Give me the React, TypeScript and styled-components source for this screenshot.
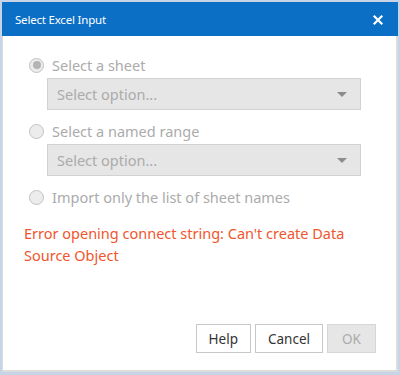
import React from "react";
import styled, { createGlobalStyle } from "styled-components";

const GlobalStyle = createGlobalStyle`
  html, body {
    margin: 0;
    padding: 0;
    background: #c7d4e8;
  }
  body {
    font-family: "Noto Sans", "Open Sans", sans-serif;
  }
`;

const OPTIONS = [
  { label: "Select a sheet", checked: true, select: true },
  { label: "Select a named range", checked: false, select: true },
  { label: "Import only the list of sheet names", checked: false, select: false },
];

export default function App() {
  return (
    <>
      <GlobalStyle />
      <Frame>
        <Dialog>
          <TitleBar>
            <Title>Select Excel Input</Title>
            <CloseButton aria-label="Close">
              <svg width="10" height="10" viewBox="0 0 10 10">
                <path
                  d="M1.5 1.5 L8.5 8.5 M8.5 1.5 L1.5 8.5"
                  stroke="#fff"
                  strokeWidth="2.2"
                  strokeLinecap="square"
                />
              </svg>
            </CloseButton>
          </TitleBar>
          <Body>
            <Options>
              {OPTIONS.map((opt) => (
                <OptionGroup key={opt.label}>
                  <RadioRow>
                    <Radio $checked={opt.checked} />
                    <RadioLabel>{opt.label}</RadioLabel>
                  </RadioRow>
                  {opt.select && (
                    <SelectBox>
                      <Placeholder>Select option...</Placeholder>
                      <Caret />
                    </SelectBox>
                  )}
                </OptionGroup>
              ))}
            </Options>
            <ErrorText>
              Error opening connect string: Can't create Data Source Object
            </ErrorText>
            <Footer>
              <Button>Help</Button>
              <Button>Cancel</Button>
              <Button $disabled>OK</Button>
            </Footer>
          </Body>
        </Dialog>
      </Frame>
    </>
  );
}

const Frame = styled.div`
  width: 400px;
  height: 375px;
  padding: 2px 2px 3px 2px;
  box-sizing: border-box;
`;

const Dialog = styled.div`
  height: 100%;
  display: flex;
  flex-direction: column;
  background: #fff;
`;

const TitleBar = styled.div`
  height: 34px;
  flex: none;
  background: #0b6fc6;
  display: flex;
  align-items: center;
  justify-content: space-between;
  padding: 0 14px 0 13px;
`;

const Title = styled.div`
  color: #fff;
  font-size: 11.5px;
  letter-spacing: -0.2px;
`;

const CloseButton = styled.div`
  display: flex;
  align-items: center;
  justify-content: center;
  width: 12px;
  height: 12px;
  margin-top: 1px;
`;

const Body = styled.div`
  flex: 1;
  display: flex;
  flex-direction: column;
  border: 1px solid #dcdcdc;
  border-top: none;
  border-right-width: 2px;
  border-bottom-width: 2px;
  padding: 18px 0 17px 0;
`;

const Options = styled.div`
  display: flex;
  flex-direction: column;
  gap: 10px;
  padding-left: 26px;
`;

const OptionGroup = styled.div`
  display: flex;
  flex-direction: column;
  gap: 2px;
`;

const RadioRow = styled.div`
  display: flex;
  align-items: center;
  height: 22px;
  gap: 8px;
`;

const Radio = styled.span<{ $checked?: boolean }>`
  width: 15px;
  height: 15px;
  box-sizing: border-box;
  border-radius: 50%;
  border: 1px solid #c2c2c2;
  background: #ececec;
  display: flex;
  align-items: center;
  justify-content: center;
  &::after {
    content: "";
    display: ${(p) => (p.$checked ? "block" : "none")};
    width: 8px;
    height: 8px;
    border-radius: 50%;
    background: #b4b4b4;
  }
`;

const RadioLabel = styled.span`
  font-size: 14.5px;
  color: #ababab;
`;

const SelectBox = styled.div`
  margin-left: 18px;
  width: 314px;
  height: 32px;
  box-sizing: border-box;
  background: #e6e6e6;
  border: 1px solid #d2d2d2;
  display: flex;
  align-items: center;
  justify-content: space-between;
  padding: 0 13px 0 9px;
`;

const Placeholder = styled.span`
  font-size: 14.5px;
  color: #ababab;
`;

const Caret = styled.span`
  width: 0;
  height: 0;
  border-left: 5px solid transparent;
  border-right: 5px solid transparent;
  border-top: 5px solid #8c8c8c;
`;

const ErrorText = styled.div`
  margin-top: 14px;
  padding: 0 40px 0 21px;
  font-size: 14.5px;
  line-height: 22px;
  color: #f1552d;
`;

const Footer = styled.div`
  margin-top: auto;
  display: flex;
  justify-content: flex-end;
  gap: 4px;
  padding-right: 20px;
`;

const Button = styled.div<{ $disabled?: boolean }>`
  height: 29px;
  box-sizing: border-box;
  padding: 0 12px;
  min-width: 49px;
  display: flex;
  align-items: center;
  justify-content: center;
  font-size: 13.5px;
  border: 1px solid ${(p) => (p.$disabled ? "#d6d6d6" : "#c8c8c8")};
  background: ${(p) => (p.$disabled ? "#e6e6e6" : "#fff")};
  color: ${(p) => (p.$disabled ? "#ababab" : "#333")};
`;
